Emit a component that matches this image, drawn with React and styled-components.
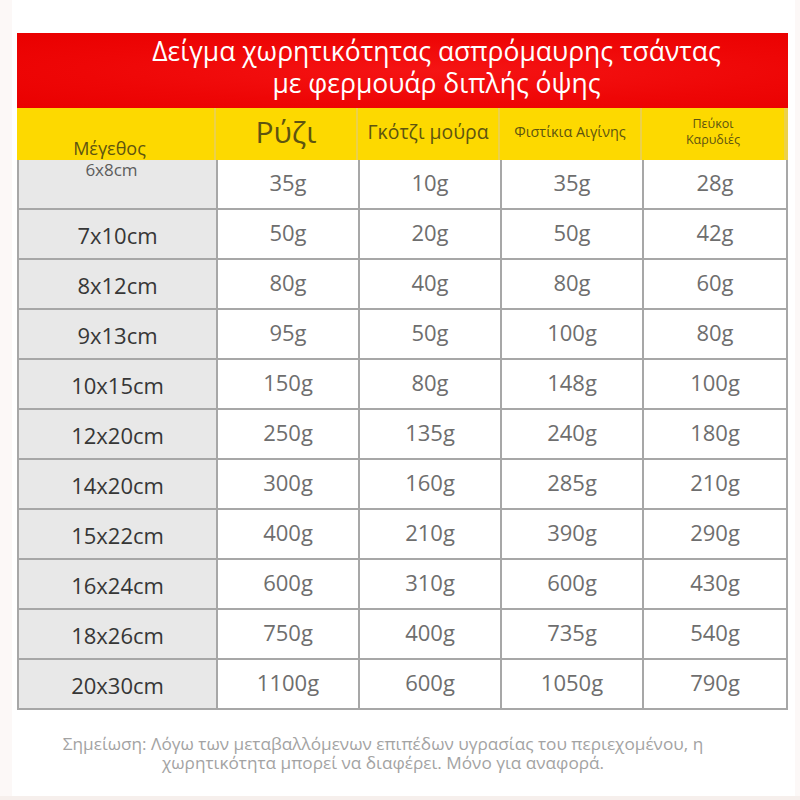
import React from 'react';
import styled, { createGlobalStyle } from 'styled-components';

const GlobalStyle = createGlobalStyle`
  html, body {
    margin: 0;
    padding: 0;
    background: #ffffff;
  }
  body {
    font-family: 'Open Sans', 'Noto Sans', 'DejaVu Sans', sans-serif;
  }
`;

const Page = styled.div`
  width: 788px;
  height: 796px;
  padding-left: 12px;
  background: #fcf8f7;
  border-bottom: 4px solid #f6efec;
`;

const Sheet = styled.div`
  width: 783px;
  height: 796px;
  background: #ffffff;
  padding: 33px 0 0 5px;
  box-sizing: border-box;
`;

const Table = styled.div`
  width: 771px;
`;

const Banner = styled.div`
  height: 75px;
  background: radial-gradient(ellipse at 55% 50%, #f51414 0%, #ee0606 60%, #e90000 100%);
  color: #ffffff;
  font-size: 26.5px;
  line-height: 32px;
  text-align: center;
  padding: 2px 0 0 68px;
  box-sizing: border-box;
`;

const cols = '197px 140px 140px 140px 142px';

const HeadRow = styled.div`
  display: grid;
  grid-template-columns: ${cols};
  column-gap: 2px;
  height: 52px;
  background: #ecd14a;
`;

const HeadCell = styled.div`
  background: #fdd900;
  color: #5e5410;
  display: flex;
  flex-direction: column;
  align-items: center;
  justify-content: ${(p) => (p.$bottom ? 'flex-end' : 'center')};
  text-align: center;
  font-size: ${(p) => p.$size}px;
  line-height: ${(p) => p.$lh || 1.2};
  padding-bottom: ${(p) => (p.$bottom ? 1 : 4)}px;
  padding-right: ${(p) => (p.$bottom ? 12 : 0)}px;
  box-sizing: border-box;
`;

const Body = styled.div`
  display: grid;
  grid-template-columns: ${cols};
  grid-auto-rows: 48px;
  gap: 2px;
  background: #a7a7a7;
  border: 2px solid #a7a7a7;
  border-top: none;
`;

const SizeCell = styled.div`
  background: #e8e8e8;
  color: #363636;
  font-size: 22px;
  display: flex;
  align-items: center;
  justify-content: center;
  padding-top: 1px;
  box-sizing: border-box;
`;

const FirstSizeCell = styled(SizeCell)`
  align-items: flex-start;
  padding: 1px 12px 0 0;
  font-size: 17px;
  color: #5c5c5c;
  line-height: 17px;
`;

const ValueCell = styled.div`
  background: #ffffff;
  color: #6e6e6e;
  font-size: 22px;
  display: flex;
  align-items: center;
  justify-content: center;
  padding-bottom: 5px;
  box-sizing: border-box;
`;

const Note = styled.div`
  margin-top: 24px;
  color: #a3a3a3;
  font-size: 17.2px;
  line-height: 19px;
  text-align: center;
  padding-right: 46px;
  white-space: nowrap;
`;

const rows = [
  ['6x8cm', '35g', '10g', '35g', '28g'],
  ['7x10cm', '50g', '20g', '50g', '42g'],
  ['8x12cm', '80g', '40g', '80g', '60g'],
  ['9x13cm', '95g', '50g', '100g', '80g'],
  ['10x15cm', '150g', '80g', '148g', '100g'],
  ['12x20cm', '250g', '135g', '240g', '180g'],
  ['14x20cm', '300g', '160g', '285g', '210g'],
  ['15x22cm', '400g', '210g', '390g', '290g'],
  ['16x24cm', '600g', '310g', '600g', '430g'],
  ['18x26cm', '750g', '400g', '735g', '540g'],
  ['20x30cm', '1100g', '600g', '1050g', '790g'],
];

export default function App() {
  return (
    <>
      <GlobalStyle />
      <Page>
        <Sheet>
          <Table>
            <Banner>
              Δείγμα χωρητικότητας ασπρόμαυρης τσάντας
              <br />
              με φερμουάρ διπλής όψης
            </Banner>
            <HeadRow>
              <HeadCell $size={18} $lh={1.1} $bottom>Μέγεθος</HeadCell>
              <HeadCell $size={30}>Ρύζι</HeadCell>
              <HeadCell $size={19.4}>Γκότζι μούρα</HeadCell>
              <HeadCell $size={14.4}>Φιστίκια Αιγίνης</HeadCell>
              <HeadCell $size={12.5} $lh={1.3}>
                <span>Πεύκοι</span>
                <span>Καρυδιές</span>
              </HeadCell>
            </HeadRow>
            <Body>
              {rows.map((row, i) => (
                <React.Fragment key={row[0]}>
                  {i === 0 ? (
                    <FirstSizeCell>{row[0]}</FirstSizeCell>
                  ) : (
                    <SizeCell>{row[0]}</SizeCell>
                  )}
                  {row.slice(1).map((v, j) => (
                    <ValueCell key={j}>{v}</ValueCell>
                  ))}
                </React.Fragment>
              ))}
            </Body>
          </Table>
          <Note>
            Σημείωση: Λόγω των μεταβαλλόμενων επιπέδων υγρασίας του περιεχομένου, η
            <br />
            χωρητικότητα μπορεί να διαφέρει. Μόνο για αναφορά.
          </Note>
        </Sheet>
      </Page>
    </>
  );
}
